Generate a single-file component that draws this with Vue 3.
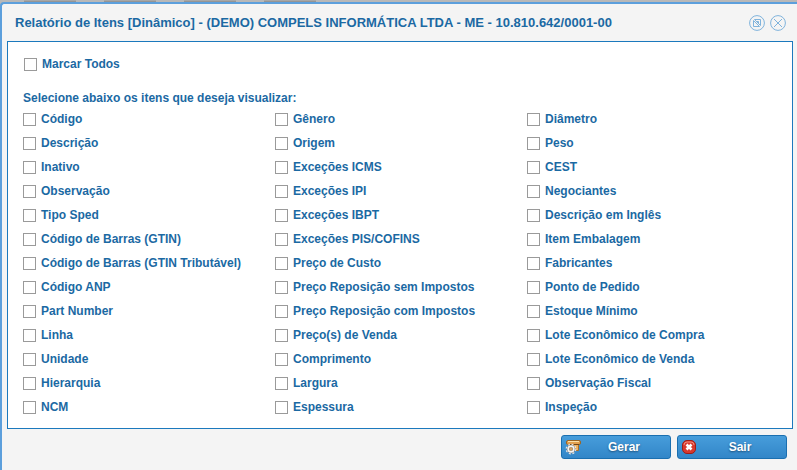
<script setup>
import { ref, computed } from 'vue'

const title = 'Relatório de Itens [Dinâmico] - (DEMO) COMPELS INFORMÁTICA LTDA - ME - 10.810.642/0001-00'

const columns = [
  [
    'Código', 'Descrição', 'Inativo', 'Observação', 'Tipo Sped',
    'Código de Barras (GTIN)', 'Código de Barras (GTIN Tributável)', 'Código ANP',
    'Part Number', 'Linha', 'Unidade', 'Hierarquia', 'NCM'
  ],
  [
    'Gênero', 'Origem', 'Exceções ICMS', 'Exceções IPI', 'Exceções IBPT',
    'Exceções PIS/COFINS', 'Preço de Custo', 'Preço Reposição sem Impostos',
    'Preço Reposição com Impostos', 'Preço(s) de Venda', 'Comprimento', 'Largura', 'Espessura'
  ],
  [
    'Diâmetro', 'Peso', 'CEST', 'Negociantes', 'Descrição em Inglês',
    'Item Embalagem', 'Fabricantes', 'Ponto de Pedido', 'Estoque Mínimo',
    'Lote Econômico de Compra', 'Lote Econômico de Venda', 'Observação Fiscal', 'Inspeção'
  ]
]

const selected = ref([])
const total = columns.flat().length

const allSelected = computed({
  get: () => selected.value.length === total,
  set: (v) => { selected.value = v ? columns.flat() : [] }
})
</script>

<template>
  <div class="page">
    <div class="backdrop">
      <span v-for="n in 4" :key="n" class="backdrop-tab"></span>
    </div>

    <section class="dialog" role="dialog" aria-labelledby="dialog-title">
      <header class="dialog-header">
        <h1 id="dialog-title">{{ title }}</h1>
        <div class="dialog-tools">
          <button type="button" class="tool" aria-label="Restaurar">
            <svg viewBox="0 0 16 16" width="16" height="16">
              <circle cx="8" cy="8" r="7.4" />
              <path d="M4.5 5.5v6h6zM5.5 4.5h6v6M5.5 4.5l6 6M7.5 6.5h2v2" />
            </svg>
          </button>
          <button type="button" class="tool" aria-label="Fechar">
            <svg viewBox="0 0 16 16" width="16" height="16">
              <circle cx="8" cy="8" r="7.4" />
              <path d="M4 4l8 8M12 4l-8 8" />
            </svg>
          </button>
        </div>
      </header>

      <div class="dialog-body">
        <label class="check check-all">
          <input v-model="allSelected" type="checkbox">
          <span>Marcar Todos</span>
        </label>

        <p class="hint">Selecione abaixo os itens que deseja visualizar:</p>

        <div class="columns">
          <div v-for="(items, i) in columns" :key="i" class="column">
            <label v-for="item in items" :key="item" class="check">
              <input v-model="selected" type="checkbox" :value="item">
              <span>{{ item }}</span>
            </label>
          </div>
        </div>
      </div>

      <footer class="dialog-footer">
        <button type="button" class="btn">
          <svg viewBox="0 0 16 16" width="16" height="16">
            <rect x="1.5" y="1.5" width="14" height="4" rx="1.5" fill="#e2a050" stroke="#9a6526" />
            <path d="M3 2.5h11" stroke="#fbe0a8" />
            <path d="M4.5 5.5h9v6h-9z" fill="#eeb060" stroke="#a76d28" />
            <path d="M4 5.5h10" stroke="#6f451a" />
            <circle cx="6" cy="10" r="4.4" fill="none" stroke="#e4e4e4" stroke-width="2" stroke-dasharray="1.9 1.55" />
            <circle cx="6" cy="10" r="3" fill="#d9a25c" stroke="#777" stroke-width="2.6" />
            <circle cx="6" cy="10" r="2.9" fill="none" stroke="#f4f4f4" stroke-width="1.6" />
          </svg>
          <span>Gerar</span>
        </button>
        <button type="button" class="btn">
          <svg viewBox="0 0 16 16" width="16" height="16">
            <rect x="1.5" y="1.5" width="13" height="13" rx="4.5" fill="#d8392e" stroke="#9d1c17" />
            <path d="M3 6q0-3 3-3h4q3 0 3 3" fill="none" stroke="#f08a7c" />
            <path d="M5.5 5.5l5 5M10.5 5.5l-5 5" stroke="#fff" stroke-width="2.6" />
          </svg>
          <span>Sair</span>
        </button>
      </footer>
    </section>
  </div>
</template>

<style>
body { margin: 0; background: #f4f4f4; }
</style>

<style scoped>
.page {
  display: flex;
  flex-direction: column;
  min-height: 100vh;
  background: #b8b8b8;
  color: #1b69a3;
  font: bold 12px/16px "Liberation Sans", Arial, sans-serif;
}

.backdrop { display: flex; gap: 28px; height: 2px; padding-left: 24px; }
.backdrop-tab { width: 52px; background: linear-gradient(#b0b0b0, #8c8c8c); }

/* Dialog */
.dialog {
  flex: 1;
  box-sizing: border-box;
  padding: 0 4px 0 5px;
  border-top: 2px solid #5c9fdc;
  border-left: 2px solid #5c9fdc;
  border-radius: 4px 0 0 0;
  background: #f4f4f4;
}
.dialog-header {
  display: flex;
  align-items: center;
  justify-content: space-between;
  height: 37px;
  padding: 0 7px 0 8px;
}
.dialog-header h1 { margin: 0; font-size: 13px; line-height: 16px; }
.dialog-tools { display: flex; gap: 5px; }
.tool { display: flex; padding: 0; border: 0; background: none; cursor: pointer; }
.tool svg { fill: none; stroke: #7fb3dc; stroke-width: 1; }

.dialog-body {
  padding: 14px 13px 9px 15px;
  border: 1px solid #1c79bd;
  background: #fff;
}

/* Checkboxes */
.check { display: flex; align-items: center; gap: 5px; height: 24px; white-space: nowrap; }
.check input {
  appearance: none;
  flex-shrink: 0;
  width: 13px;
  height: 13px;
  margin: 0;
  border: 1px solid #9a9a9a;
  background: #fff;
}
.check input:checked { background: #1b69a3; box-shadow: inset 0 0 0 2px #fff; }
.check-all { height: 16px; padding-left: 1px; }
.hint { margin: 18px 0 1px; }
.columns { display: grid; grid-template-columns: repeat(3, 1fr); }

/* Footer */
.dialog-footer { display: flex; justify-content: flex-end; gap: 6px; padding: 6px 6px 10px; }
.btn {
  display: flex;
  align-items: center;
  box-sizing: border-box;
  width: 110px;
  height: 24px;
  padding: 0 3px;
  border: 1px solid #1a6fb0;
  border-radius: 3px;
  background: linear-gradient(#479ddb, #3286c8);
  color: #fff;
  font: inherit;
  text-shadow: 0 1px 2px #1d4f7a;
  cursor: pointer;
}
.btn span { flex: 1; }
</style>
